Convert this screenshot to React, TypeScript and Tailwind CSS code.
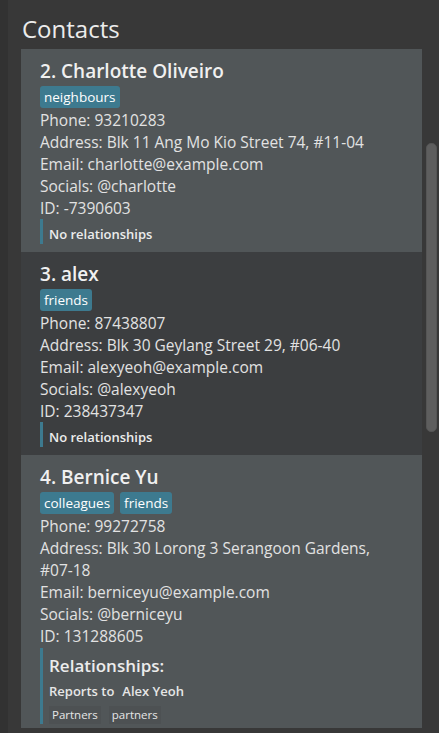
import React from "react";

const font = { fontFamily: '"Open Sans", "Noto Sans", sans-serif' };

function Tag({ label }: { label: string }) {
  return (
    <span className="rounded-[3px] bg-[#3d7a8f] px-[4px] text-[13.5px] leading-[22px] text-white">
      {label}
    </span>
  );
}

function Field({ children }: { children: React.ReactNode }) {
  return <div className="text-[15.5px] leading-[22px] text-[#e2e2e2]">{children}</div>;
}

type Contact = {
  idx: number;
  name: string;
  tags: string[];
  phone: string;
  address: string;
  email: string;
  socials: string;
  id: string;
  dark: boolean;
  rel?: boolean;
};

const contacts: Contact[] = [
  {
    idx: 2,
    name: "Charlotte Oliveiro",
    tags: ["neighbours"],
    phone: "93210283",
    address: "Blk 11 Ang Mo Kio Street 74, #11-04",
    email: "charlotte@example.com",
    socials: "@charlotte",
    id: "-7390603",
    dark: false,
  },
  {
    idx: 3,
    name: "alex",
    tags: ["friends"],
    phone: "87438807",
    address: "Blk 30 Geylang Street 29, #06-40",
    email: "alexyeoh@example.com",
    socials: "@alexyeoh",
    id: "238437347",
    dark: true,
  },
  {
    idx: 4,
    name: "Bernice Yu",
    tags: ["colleagues", "friends"],
    phone: "99272758",
    address: "Blk 30 Lorong 3 Serangoon Gardens, #07-18",
    email: "berniceyu@example.com",
    socials: "@berniceyu",
    id: "131288605",
    dark: false,
    rel: true,
  },
];

function Card({ c }: { c: Contact }) {
  return (
    <div
      className={`shrink-0 pl-[19px] pr-[30px] pt-[8px] ${
        c.rel ? "pb-[4px]" : "pb-[8px]"
      } ${c.dark ? "bg-[#3c3e40]" : "bg-[#515658]"}`}
    >
      <div className="text-[19px] font-semibold leading-[28px] text-[#f0f0f0]">
        {c.idx}. {c.name}
      </div>
      <div className="flex gap-[6px] pt-[1px] pb-[1px]">
        {c.tags.map((t) => (
          <Tag key={t} label={t} />
        ))}
      </div>
      <Field>Phone: {c.phone}</Field>
      <Field>Address: {c.address}</Field>
      <Field>Email: {c.email}</Field>
      <Field>Socials: {c.socials}</Field>
      <Field>ID: {c.id}</Field>
      {c.rel ? (
        <div className="mt-[1px] border-l-[3px] border-[#3d7a8f] pl-[6px]">
          <div className="pt-[5px] text-[17px] font-semibold leading-[26px] text-[#ececec]">
            Relationships:
          </div>
          <div className="text-[13px] font-semibold leading-[24px] text-[#e6e6e6]">
            Reports to<span className="ml-[8px]">Alex Yeoh</span>
          </div>
          <div className="flex gap-[8px] pt-[3px]">
            <span className="bg-[#4d5153] px-[3px] text-[11.5px] leading-[18px] text-[#e6e6e6]">
              Partners
            </span>
            <span className="bg-[#4d5153] px-[3px] text-[11.5px] leading-[18px] text-[#e6e6e6]">
              partners
            </span>
          </div>
        </div>
      ) : (
        <div className="border-l-[3px] border-[#3d7a8f] pl-[6px] pt-[6px] text-[13px] font-semibold leading-[19px] text-[#ececec]">
          No relationships
        </div>
      )}
    </div>
  );
}

export default function App() {
  return (
    <div className="flex h-[733px] w-[439px] overflow-hidden bg-[#383838]" style={font}>
      <div className="w-[8px] shrink-0 bg-[#323232]" />
      <div className="flex flex-1 flex-col pl-[13px]">
        <div className="h-[49px] pt-[13px] pl-[1px] text-[24px] leading-[32px] text-[#ececec]">
          Contacts
        </div>
        <div className="flex h-[679px]">
          <div className="flex w-[401px] flex-col overflow-hidden">
            {contacts.map((c) => (
              <Card key={c.idx} c={c} />
            ))}
          </div>
          <div className="ml-[4px] mt-[94px] h-[289px] w-[11px] rounded-[5px] border border-[#555555] bg-[#5e5e5e]" />
        </div>
      </div>
    </div>
  );
}
